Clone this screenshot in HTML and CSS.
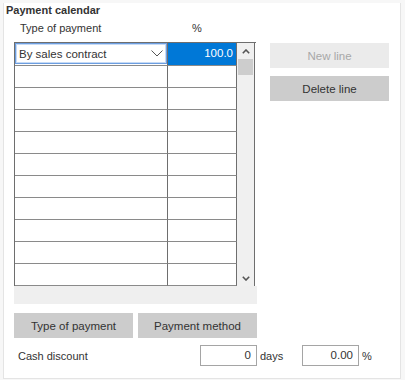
FILE: index.html
```html
<!DOCTYPE html>
<html lang="en">
<head>
    <meta charset="UTF-8">
    <meta name="viewport" content="width=device-width, initial-scale=1.0">
    <title>Payment calendar</title>
    <link rel="stylesheet" href="styles.css">
</head>
<body>
    <section class="panel">
        <div class="title">Payment calendar</div>
        <div class="col-head">
            <span class="col-type">Type of payment</span>
            <span class="col-pct">%</span>
        </div>

        <div class="main">
            <div class="list">
                <div class="grid">
                    <div class="rows">
                        <div class="row first">
                            <div class="cell type">
                                <div class="combo">
                                    <span>By sales contract</span>
                                    <svg width="12" height="7" viewBox="0 0 12 7"><polyline points="0.5,0.5 6,6 11.5,0.5" fill="none" stroke="#555" stroke-width="1"/></svg>
                                </div>
                            </div>
                            <div class="cell pct selected">100.0</div>
                        </div>
                        <div class="row"><div class="cell type"></div><div class="cell pct"></div></div>
                        <div class="row"><div class="cell type"></div><div class="cell pct"></div></div>
                        <div class="row"><div class="cell type"></div><div class="cell pct"></div></div>
                        <div class="row"><div class="cell type"></div><div class="cell pct"></div></div>
                        <div class="row"><div class="cell type"></div><div class="cell pct"></div></div>
                        <div class="row"><div class="cell type"></div><div class="cell pct"></div></div>
                        <div class="row"><div class="cell type"></div><div class="cell pct"></div></div>
                        <div class="row"><div class="cell type"></div><div class="cell pct"></div></div>
                        <div class="row"><div class="cell type"></div><div class="cell pct"></div></div>
                        <div class="row"><div class="cell type"></div><div class="cell pct"></div></div>
                    </div>
                    <div class="scrollbar">
                        <div class="arrow">
                            <svg width="8" height="5" viewBox="0 0 8 5"><polyline points="0.8,4.2 4,1 7.2,4.2" fill="none" stroke="#555" stroke-width="1.6"/></svg>
                        </div>
                        <div class="thumb"></div>
                        <div class="track"></div>
                        <div class="arrow">
                            <svg width="8" height="5" viewBox="0 0 8 5"><polyline points="0.8,0.8 4,4 7.2,0.8" fill="none" stroke="#555" stroke-width="1.6"/></svg>
                        </div>
                    </div>
                </div>
                <div class="list-foot"></div>
            </div>

            <div class="side">
                <button class="btn" disabled>New line</button>
                <button class="btn">Delete line</button>
            </div>
        </div>

        <div class="actions">
            <button class="btn">Type of payment</button>
            <button class="btn">Payment method</button>
        </div>

        <div class="discount">
            <span class="discount-label">Cash discount</span>
            <span class="field">0</span>
            <span class="unit days">days</span>
            <span class="field">0.00</span>
            <span class="unit">%</span>
        </div>
    </section>
</body>
</html>
```

FILE: styles.css
```css
body {
    margin: 0;
    background-color: #f7f7f7;
    font-family: "Liberation Sans", Arial, sans-serif;
    font-size: 11px;
    color: #333;
}

/* 外框 */
.panel {
    box-sizing: border-box;
    width: 398px;
    height: 376px;
    margin-left: 3px;
    background-color: #fff;
    border: 1px solid #e4e4e4;
    border-top: none;
}

.title {
    margin-top: 3px;
    padding-left: 2px;
    line-height: 14px;
    font-weight: bold;
}

.col-head {
    display: flex;
    margin-top: 4px;
    padding-left: 16px;
    line-height: 14px;
}

.col-type {
    width: 172px;
}

.main {
    display: flex;
    margin-top: 7px;
    margin-left: 10px;
}

.list {
    width: 243px;
}

.grid {
    display: flex;
    width: 241px;
    border-top: 1px solid #6e6e6e;
    border-left: 1px solid #6e6e6e;
}

.rows {
    width: 222px;
}

.row {
    display: flex;
    height: 22px;
}

.row.first {
    height: 23px;
}

.cell {
    box-sizing: border-box;
    height: 100%;
    border-right: 1px solid #6e6e6e;
    border-bottom: 1px solid #8a8a8a;
}

.cell.type {
    width: 153px;
}

.cell.pct {
    width: 69px;
}

.cell.selected {
    background-color: #0078d7;
    color: #fff;
    text-align: right;
    padding-right: 3px;
    line-height: 21px;
    font-size: 11.5px;
}

.combo {
    box-sizing: border-box;
    display: flex;
    align-items: center;
    justify-content: space-between;
    height: 21px;
    padding: 0 3px 0 3px;
    border: 1px solid #6c9ee0;
    box-shadow: inset 0 0 0 1px #c6daf5;
    background-color: #fff;
    font-size: 11.5px;
}

/* 滚动条 */
.scrollbar {
    box-sizing: border-box;
    display: flex;
    flex-direction: column;
    width: 18px;
    background-color: #f0f0f0;
    border-right: 1px solid #6e6e6e;
}

.arrow {
    display: flex;
    align-items: center;
    justify-content: center;
    height: 16px;
}

.thumb {
    height: 16px;
    margin: 0 1px;
    background-color: #cdcdcd;
}

.track {
    flex: 1;
}

.list-foot {
    height: 18px;
    background-color: #efefef;
}

.btn {
    box-sizing: border-box;
    width: 119px;
    height: 25px;
    padding: 0;
    border: none;
    background-color: #cccccc;
    color: #333;
    font-family: "Liberation Sans", Arial, sans-serif;
    font-size: 11.5px;
}

.btn:disabled {
    background-color: #ebebeb;
    color: #a8a8a8;
}

.side {
    display: flex;
    flex-direction: column;
    gap: 8px;
    margin-top: 1px;
    margin-left: 13px;
}

.actions {
    display: flex;
    gap: 5px;
    margin-top: 9px;
    margin-left: 10px;
}

.discount {
    display: flex;
    align-items: center;
    margin-top: 7px;
    padding-left: 14px;
}

.discount-label {
    width: 182px;
}

.field {
    box-sizing: border-box;
    width: 57px;
    height: 21px;
    line-height: 19px;
    padding-right: 5px;
    text-align: right;
    border: 1px solid #a5a5a5;
    font-size: 11.5px;
}

.unit {
    padding-left: 3px;
}

.unit.days {
    width: 42px;
}
```
